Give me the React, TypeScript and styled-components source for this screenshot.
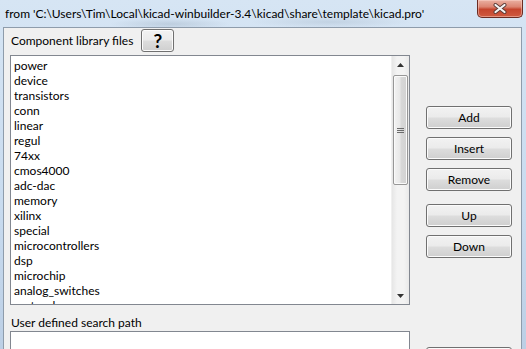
import styled, { createGlobalStyle } from 'styled-components';

const libraries = [
  'power',
  'device',
  'transistors',
  'conn',
  'linear',
  'regul',
  '74xx',
  'cmos4000',
  'adc-dac',
  'memory',
  'xilinx',
  'special',
  'microcontrollers',
  'dsp',
  'microchip',
  'analog_switches',
  'motorola',
];

const GlobalStyle = createGlobalStyle`
  html, body {
    margin: 0;
    padding: 0;
    overflow: hidden;
  }
  body {
    font-family: Lato, 'Noto Sans', sans-serif;
    font-size: 12px;
    color: #000;
  }
`;

const App = () => {
  return (
    <>
      <GlobalStyle />
      <Window>
        <TitleBar>
          <Title>from 'C:\Users\Tim\Local\kicad-winbuilder-3.4\kicad\share\template\kicad.pro'</Title>
          <CloseButton>
            <svg width="14" height="11" viewBox="0 0 14 11">
              <path d="M2.5 2 L11.5 9 M11.5 2 L2.5 9" stroke="#5b3b37" strokeWidth="4" strokeLinecap="round" />
              <path d="M2.5 2 L11.5 9 M11.5 2 L2.5 9" stroke="#f4f4f4" strokeWidth="2.2" strokeLinecap="round" />
            </svg>
          </CloseButton>
        </TitleBar>
        <Client>
          <LeftColumn>
            <HeaderRow>
              <Label>Component library files</Label>
              <HelpButton>?</HelpButton>
            </HeaderRow>
            <ListBox>
              <Items>
                {libraries.map((name) => (
                  <Item key={name}>{name}</Item>
                ))}
              </Items>
              <ScrollBar>
                <ArrowCell>
                  <svg width="7" height="4" viewBox="0 0 7 4">
                    <path d="M3.5 0 L7 4 L0 4 Z" fill="#333" />
                  </svg>
                </ArrowCell>
                <Track>
                  <Thumb>
                    <svg width="7" height="7" viewBox="0 0 7 7">
                      <path d="M0 1.5 H7 M0 3.5 H7 M0 5.5 H7" stroke="#6b6b6b" strokeWidth="1" />
                    </svg>
                  </Thumb>
                </Track>
                <ArrowCell>
                  <svg width="7" height="4" viewBox="0 0 7 4">
                    <path d="M0 0 L7 0 L3.5 4 Z" fill="#333" />
                  </svg>
                </ArrowCell>
              </ScrollBar>
            </ListBox>
            <SearchLabel>User defined search path</SearchLabel>
            <TextBox />
          </LeftColumn>
          <RightColumn>
            <DialogButton>Add</DialogButton>
            <DialogButton $gap={8}>Insert</DialogButton>
            <DialogButton $gap={8}>Remove</DialogButton>
            <DialogButton $gap={13}>Up</DialogButton>
            <DialogButton $gap={8}>Down</DialogButton>
            <DialogButton $gap={89} />
          </RightColumn>
        </Client>
      </Window>
    </>
  );
};

export default App;

const Window = styled.div`
  width: 526px;
  height: 349px;
  display: flex;
  flex-direction: column;
  overflow: hidden;
  background:
    radial-gradient(ellipse 60px 6px at 170px 24px, rgba(120, 140, 160, 0.25), transparent),
    radial-gradient(ellipse 80px 6px at 330px 22px, rgba(120, 140, 160, 0.2), transparent),
    linear-gradient(#d6e5f4 0%, #c8dbef 60%, #bccfe5 100%);
`;

const TitleBar = styled.div`
  height: 27px;
  flex-shrink: 0;
  display: flex;
  align-items: flex-start;
`;

const Title = styled.div`
  padding: 6px 0 0 5px;
  line-height: 16px;
  white-space: nowrap;
  color: #000;
`;

const CloseButton = styled.div`
  margin-left: auto;
  margin-right: 3px;
  width: 46px;
  height: 18px;
  box-sizing: border-box;
  border: 1px solid #6b2b22;
  border-top: none;
  border-radius: 0 0 5px 5px;
  background: linear-gradient(#eab0a2 0%, #dc8572 40%, #c5452e 55%, #cf5a40 100%);
  box-shadow: inset 0 0 0 1px rgba(255, 220, 210, 0.45);
  display: flex;
  align-items: center;
  justify-content: center;
`;

const Client = styled.div`
  flex: 1;
  min-height: 0;
  display: flex;
  margin: 0 4px 0 3px;
  border: 1px solid #8e9cab;
  border-bottom: none;
  background: #f0f0f0;
`;

const LeftColumn = styled.div`
  width: 400px;
  flex-shrink: 0;
  padding-left: 6px;
  display: flex;
  flex-direction: column;
`;

const HeaderRow = styled.div`
  height: 23px;
  margin: 1px 0 3px;
  display: flex;
  align-items: center;
  gap: 8px;
`;

const Label = styled.div`
  padding-left: 1px;
  line-height: 16px;
  white-space: nowrap;
`;

const ButtonBase = styled.button`
  box-sizing: border-box;
  height: 23px;
  padding: 0;
  border: 1px solid #707070;
  border-radius: 3px;
  background: linear-gradient(#f2f2f2 0%, #ebebeb 48%, #dddddd 52%, #cfcfcf 100%);
  box-shadow: inset 0 0 0 1px #fbfbfb;
  font-family: Lato, 'Noto Sans', sans-serif;
  color: #000;
`;

const HelpButton = styled(ButtonBase)`
  width: 33px;
  font-size: 19px;
  font-weight: 700;
  line-height: 20px;
`;

const ListBox = styled.div`
  height: 250px;
  box-sizing: border-box;
  flex-shrink: 0;
  border: 1px solid #828790;
  background: #fff;
  display: flex;
  overflow: hidden;
`;

const Items = styled.div`
  flex: 1;
  padding: 2px 0 0 3px;
  overflow: hidden;
`;

const Item = styled.div`
  height: 15px;
  line-height: 15px;
  white-space: nowrap;
`;

const ScrollBar = styled.div`
  width: 17px;
  flex-shrink: 0;
  display: flex;
  flex-direction: column;
  background: linear-gradient(to right, #e6e6e6, #f3f3f3 30%, #f3f3f3 70%, #e9e9e9);
  border-left: 1px solid #f0f0f0;
`;

const ArrowCell = styled.div`
  height: 17px;
  flex-shrink: 0;
  display: flex;
  align-items: center;
  justify-content: center;
`;

const Track = styled.div`
  flex: 1;
  padding: 2px 1px 0;
`;

const Thumb = styled.div`
  height: 110px;
  box-sizing: border-box;
  border: 1px solid #979797;
  border-radius: 2px;
  background: linear-gradient(to right, #f3f3f3 0%, #e8e8e8 45%, #d8d8d8 55%, #d2d2d2 100%);
  box-shadow: inset 0 0 0 1px #fafafa;
  display: flex;
  align-items: center;
  justify-content: center;
`;

const SearchLabel = styled.div`
  margin-top: 10px;
  padding-left: 1px;
  line-height: 16px;
  white-space: nowrap;
`;

const TextBox = styled.div`
  flex: 1;
  box-sizing: border-box;
  border: 1px solid #828790;
  border-bottom: none;
  background: #fff;
`;

const RightColumn = styled.div`
  width: 86px;
  margin-left: 16px;
  padding-top: 78px;
  display: flex;
  flex-direction: column;
`;

const DialogButton = styled(ButtonBase)<{ $gap?: number }>`
  width: 86px;
  flex-shrink: 0;
  margin-top: ${(p) => p.$gap ?? 0}px;
  font-size: 12px;
`;
